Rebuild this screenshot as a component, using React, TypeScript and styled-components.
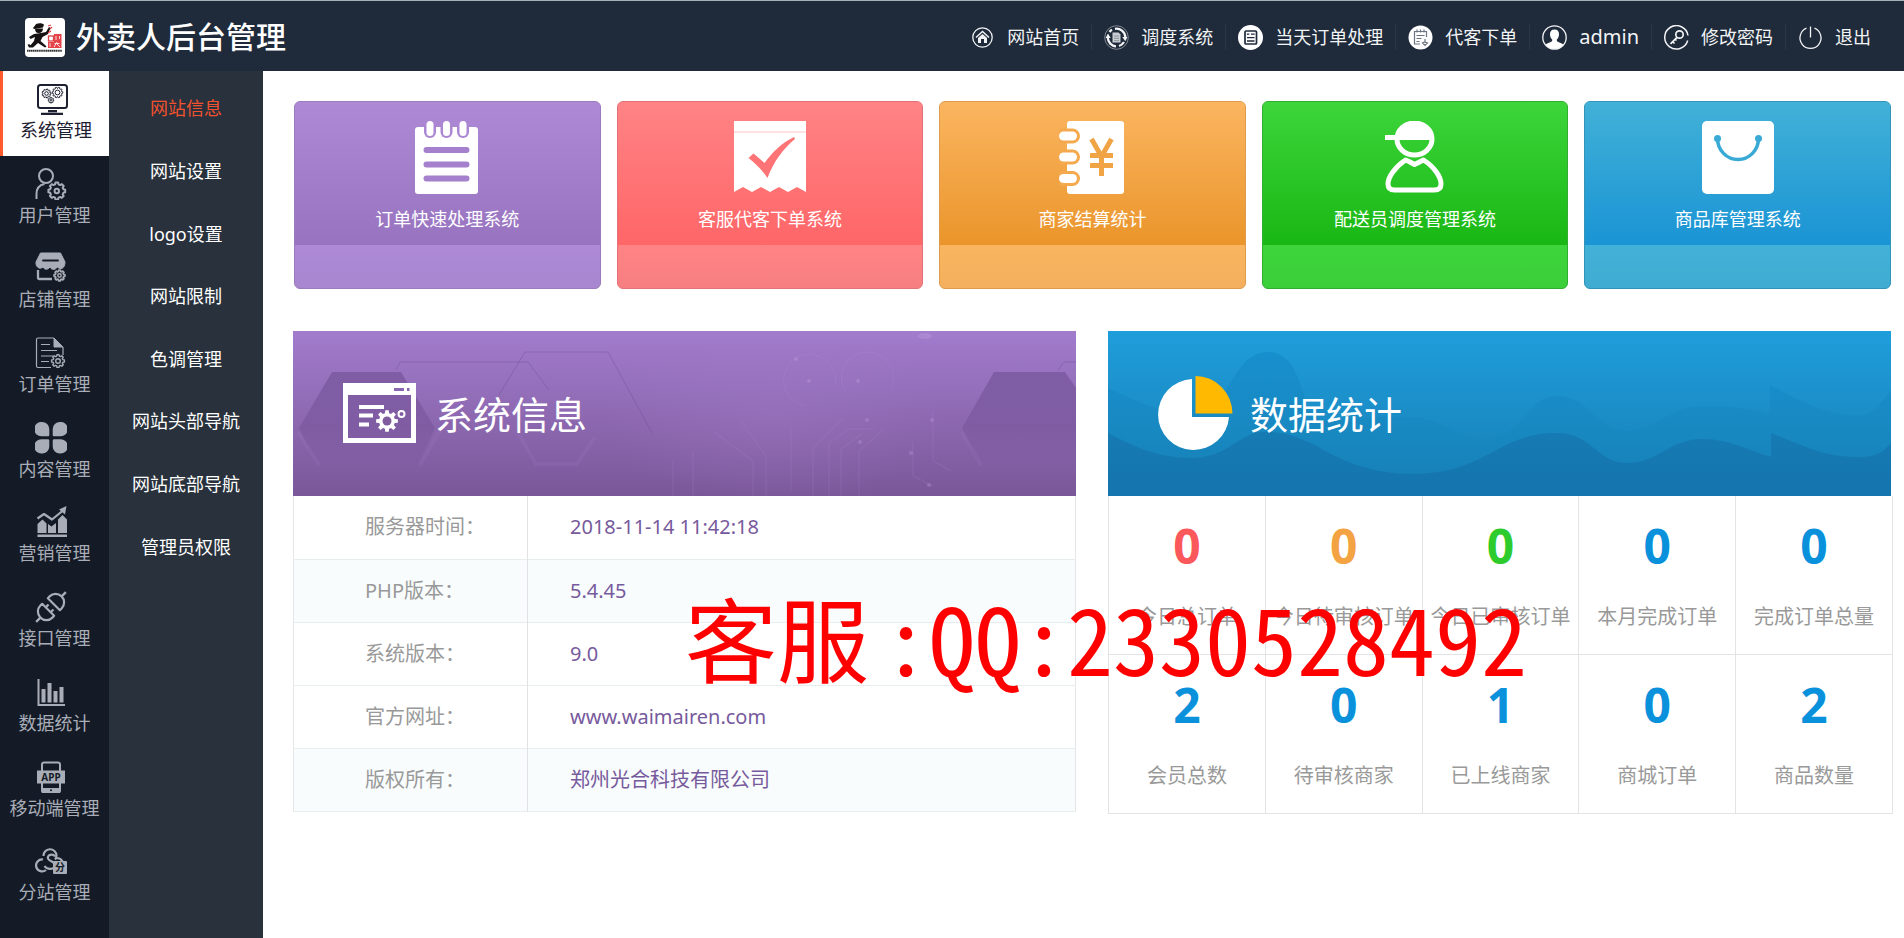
import React from "react";
import styled, { createGlobalStyle } from "styled-components";

const GlobalStyle = createGlobalStyle`
  *, *::before, *::after { box-sizing: border-box; }
  body {
    margin: 0;
    background: #fff;
    font-family: "Noto Sans", "Noto Sans CJK SC", sans-serif;
    font-size: 18px;
    line-height: 26px;
  }
  a { color: inherit; text-decoration: none; }
  svg { display: block; }
`;

/* ---------- layout ---------- */

const Page = styled.div`
  display: flex;
  flex-direction: column;
  min-height: 100vh;
`;

const Header = styled.header`
  display: flex;
  align-items: center;
  justify-content: space-between;
  height: 71px;
  padding: 2px 21px 0 25px;
  background: #1f2a3a;
  border-top: 1px solid #a5b1b5;
`;

const Brand = styled.a`
  display: flex;
  align-items: center;
  gap: 11px;
  color: #fff;
  white-space: nowrap;
`;

const BrandName = styled.span`
  font-size: 30px;
  font-weight: 500;
  line-height: 40px;
`;

const TopNav = styled.nav`
  display: flex;
  align-items: center;
`;

const TopLink = styled.a<{ $latin?: boolean }>`
  display: flex;
  align-items: center;
  gap: 12px;
  height: 26px;
  padding: 0 12px;
  color: #f2f4f6;
  font-size: ${(p) => (p.$latin ? "20px" : "18px")};
  white-space: nowrap;
  & + & { border-left: 1px solid #2b3644; }
`;

const Body = styled.div`
  display: flex;
  flex: 1;
`;

const MainNav = styled.nav`
  flex: none;
  width: 109px;
  background: #141b26;
`;

const MainNavList = styled.div`
  display: grid;
  grid-auto-rows: 1fr;
  min-height: 847px;
`;

const MainNavLink = styled.a<{ $active?: boolean }>`
  display: flex;
  flex-direction: column;
  align-items: center;
  gap: 2px;
  padding-top: 12px;
  color: ${(p) => (p.$active ? "#1c2030" : "#a9adb7")};
  background: ${(p) => (p.$active ? "#fff" : "transparent")};
  border-left: ${(p) => (p.$active ? "3px solid #ff5a2c" : "0")};
  white-space: nowrap;
  svg { margin-right: 8px; }
`;

const SubNav = styled.nav`
  flex: none;
  width: 154px;
  padding-top: 6px;
  background: #28313c;
`;

const SubNavList = styled.div`
  display: grid;
  grid-auto-rows: 1fr;
  min-height: 501px;
`;

const SubNavLink = styled.a<{ $active?: boolean }>`
  display: grid;
  place-items: center;
  color: ${(p) => (p.$active ? "#f2522f" : "#fff")};
  white-space: nowrap;
`;

const Main = styled.main`
  flex: 1;
  min-width: 0;
  padding: 30px 13px 30px 30px;
`;

/* ---------- shortcut cards ---------- */

const Cards = styled.div`
  display: grid;
  grid-template-columns: repeat(5, 1fr);
  gap: 16px;
  padding-left: 1px;
`;

const Card = styled.a<{ $fill: string; $edge: string }>`
  display: flex;
  flex-direction: column;
  border: 1px solid ${(p) => p.$edge};
  border-radius: 6px;
  overflow: hidden;
  color: #fff;
  background: ${(p) => p.$fill};
`;

const CardTop = styled.div<{ $from: string; $to: string }>`
  display: flex;
  flex-direction: column;
  align-items: center;
  gap: 12px;
  padding: 19px 0 13px;
  background: linear-gradient(${(p) => p.$from}, ${(p) => p.$to});
  white-space: nowrap;
`;

const CardFoot = styled.div`
  height: 43px;
  background: linear-gradient(transparent, rgba(0, 0, 0, 0.03));
`;

/* ---------- panels ---------- */

const Panels = styled.div`
  position: relative;
  display: grid;
  grid-template-columns: 1fr 1fr;
  align-items: start;
  gap: 32px;
  margin-top: 42px;
`;

const Panel = styled.section`
  min-width: 0;
`;

const Banner = styled.header<{ $from: string; $to: string }>`
  position: relative;
  display: flex;
  align-items: center;
  gap: 17px;
  height: 165px;
  padding-left: 50px;
  color: #fff;
  background: linear-gradient(${(p) => p.$from}, ${(p) => p.$to});
`;

const BannerArt = styled.svg`
  position: absolute;
  inset: 0;
  width: 100%;
  height: 100%;
`;

const BannerIcon = styled.svg`
  position: relative;
`;

const BannerTitle = styled.h2`
  position: relative;
  margin: 0;
  font-size: 38px;
  font-weight: 400;
  line-height: 50px;
`;

const InfoTable = styled.table`
  width: 100%;
  border: 1px solid #e6e6ea;
  border-top: 0;
  border-collapse: collapse;
  table-layout: fixed;
  font-size: 20px;
`;

const InfoRow = styled.tr<{ $tint?: boolean }>`
  height: 63px;
  background: ${(p) => (p.$tint ? "#f8fcfc" : "#fff")};
  border-bottom: 1px solid #e8eeee;
`;

const InfoLabel = styled.th`
  width: 234px;
  padding: 0 0 0 71px;
  border-right: 1px solid #e2e2e6;
  color: #999;
  font-weight: 400;
  text-align: left;
`;

const InfoValue = styled.td`
  padding: 0 0 0 42px;
  color: #775a9c;
`;

const Stats = styled.dl`
  display: grid;
  grid-template-columns: repeat(5, 1fr);
  margin: 0 -2px 0 0;
  border-left: 1px solid #e4e4e6;
`;

const Stat = styled.div`
  display: flex;
  flex-direction: column-reverse;
  justify-content: flex-end;
  align-items: center;
  gap: 28px;
  height: 159px;
  padding-top: 20px;
  border: solid #e4e4e6;
  border-width: 0 1px 1px 0;
`;

const StatLabel = styled.dt`
  color: #999;
  font-size: 20px;
  white-space: nowrap;
`;

const StatValue = styled.dd<{ $color: string }>`
  margin: 0;
  color: ${(p) => p.$color};
  font-size: 48px;
  font-weight: 700;
  line-height: 60px;
`;

const Contact = styled.p`
  position: absolute;
  top: 245px;
  left: 392px;
  display: flex;
  gap: 14px;
  margin: 0;
  color: #f00;
  font-family: "Noto Sans Mono CJK SC", "Noto Sans CJK SC", sans-serif;
  font-size: 92px;
  line-height: 120px;
  white-space: nowrap;
  pointer-events: none;
`;

/* ---------- icon helpers ---------- */

const gear = (cx: number, cy: number, r: number, teeth: number, depth: number) => {
  const pts: string[] = [];
  for (let i = 0; i < teeth; i++) {
    const step = (Math.PI * 2) / teeth;
    [[-0.34, r - depth], [-0.2, r], [0.2, r], [0.34, r - depth]].forEach(([o, rad]) => {
      const a = i * step + o * step;
      pts.push(`${(cx + rad * Math.cos(a)).toFixed(2)},${(cy + rad * Math.sin(a)).toFixed(2)}`);
    });
  }
  return pts.join(" ");
};

const NavSvg = ({ children }: { children: React.ReactNode }) => (
  <svg width="32" height="32" viewBox="0 0 32 32" fill="none" stroke="currentColor" strokeWidth="2" strokeLinejoin="round" aria-hidden="true">
    {children}
  </svg>
);

const SystemIcon = () => (
  <NavSvg>
    <rect x="2" y="2" width="29" height="23" rx="2.5" />
    <g strokeWidth="1">
      <polygon points={gear(10.5, 10.5, 4.5, 9, 1)} />
      <circle cx="10.5" cy="10.5" r="1.8" />
      <polygon points={gear(21.5, 9.5, 5.3, 10, 1)} />
      <circle cx="21.5" cy="9.5" r="2.4" />
      <polygon points={gear(15, 17.3, 2.8, 8, 0.7)} />
      <circle cx="15" cy="17.3" r="0.8" />
    </g>
    <path d="M12 28.2h9M5 30.800h22" strokeWidth="2.300" />
  </NavSvg>
);

const UserIcon = () => (
  <NavSvg>
    <circle cx="11" cy="8" r="7" />
    <path d="M1.500 31v-5c0-6 3-9 8-10" />
    <polygon points={gear(21.800, 23, 8.500, 8, 1.700)} />
    <circle cx="21.800" cy="23" r="2.200" />
  </NavSvg>
);

const ShopIcon = () => (
  <NavSvg>
    <path d="M5.500 1h20l4.500 9c0 7-5 8-7.500 5-2.500 3.500-6 3-7.500 0-2 3-5.500 3-7 0C4.500 18 .5 15 1 10z" fill="currentColor" strokeWidth="1" />
    <path d="M8 8.500h15" stroke="#141b26" strokeWidth="1.800" strokeLinecap="round" />
    <path d="M3 18v7.500c0 1 .5 1.500 1.500 1.500H17" strokeWidth="2.300" />
    <polygon points={gear(24.500, 23.500, 5.500, 8, 1.300)} strokeWidth="1.700" />
    <circle cx="24.500" cy="23.500" r="1.700" strokeWidth="1.500" />
  </NavSvg>
);

const OrderIcon = () => (
  <NavSvg>
    <path d="M16 30.500H3c-1 0-1.500-.5-1.500-1.500V2.500C1.500 1.500 2 1 3 1h16M28 10v8" strokeWidth="1.200" />
    <path d="M19 1l9 9h-9z" fill="currentColor" strokeWidth="1" />
    <path d="M6 7.500h9M6 13.500h16M6 19h12M6 24.500h8" strokeWidth="1.200" />
    <polygon points={gear(23, 24, 6.500, 8, 1.500)} strokeWidth="1.400" />
    <circle cx="23" cy="24" r="2.300" strokeWidth="1.400" />
  </NavSvg>
);

const ContentIcon = () => (
  <NavSvg>
    <g fill="currentColor" stroke="none">
      <path d="M7.200 0a7.200 7.200 0 1 0 0 14.300h5.600c1 0 1.500-.5 1.500-1.500V7A7.100 7.100 0 0 0 7.200 0z" />
      <path d="M24.800 0a7.200 7.200 0 1 1 0 14.300h-5.600c-1 0-1.500-.5-1.500-1.500V7a7.100 7.100 0 0 1 7.100-7z" />
      <path d="M7.200 31.500a7.200 7.200 0 1 1 0-14.300h5.600c1 0 1.500.5 1.500 1.500v5.700a7.100 7.100 0 0 1-7.100 7.100z" />
      <path d="M24.800 31.500a7.200 7.200 0 1 0 0-14.300h-5.600c-1 0-1.500.5-1.500 1.500v5.700a7.100 7.100 0 0 0 7.100 7.100z" />
    </g>
  </NavSvg>
);

const MarketIcon = () => (
  <NavSvg>
    <g fill="currentColor" stroke="none">
      <path d="M2.500 27V18l5-4.500 4 4V27zM13 27V18l3.500 2.500L21 17v10zM23 27V13.500L27.500 9l4.500 4.500V27z" />
      <path d="M2.500 28.500H32V31H2.500z" />
      <path d="M24 3.500L31.500 0 30 8.500z" />
    </g>
    <path d="M2.500 12.500L9 8l8 5.500L28 4.500" strokeWidth="2.200" />
  </NavSvg>
);

const PlugIcon = () => (
  <NavSvg>
    <g transform="rotate(-45 16 16)" strokeWidth="2.200">
      <path d="M-5 16h6M31 16h6" strokeWidth="2.300" />
      <path d="M12 7.500v17H9.500a8.500 8.500 0 0 1 0-17zM20 7.500v17h2.500a8.500 8.500 0 0 0 0-17z" />
      <path d="M12 12.500h4M12 19.500h4" />
    </g>
  </NavSvg>
);

const ChartIcon = () => (
  <NavSvg>
    <path d="M3.500 3v26H30" strokeLinejoin="miter" />
    <path d="M8.500 13v13.500M14.500 7v19.500M20.500 15v11.500M26.500 11v15.500" strokeWidth="4" />
  </NavSvg>
);

const AppIcon = () => (
  <NavSvg>
    <path d="M7 10V3.500C7 2 7.500 1.500 9 1.500h14c1.500 0 2 .5 2 2V10M7 21v8.500c0 1.500.5 2 2 2h14c1.500 0 2-.5 2-2V21" />
    <path d="M7 27h18v4.500H7z" fill="currentColor" stroke="none" />
    <rect x="2" y="9.500" width="28" height="13" fill="currentColor" stroke="none" />
    <circle cx="16" cy="29.300" r="1" fill="#141b26" stroke="none" />
    <text x="16" y="19.500" textAnchor="middle" fontSize="10" fontWeight="700" fill="#141b26" stroke="none">APP</text>
  </NavSvg>
);

const BranchIcon = () => (
  <NavSvg>
    <path d="M8 14.500a6 6 0 1 0 3 10.500M8.500 11a6.500 6.500 0 0 1 13-.5c0 2-.5 3-1.500 4M20 11.500c-2-3-8-2-7 2 .8 3 7 2.500 7 6.500 0 5-8 5-10.500 1M21.500 13c3 0 5 1.500 6 3.500" strokeWidth="2.200" />
    <rect x="18" y="16" width="14" height="13" rx="1" fill="currentColor" stroke="none" />
    <text x="25" y="26" textAnchor="middle" fontSize="10" fontWeight="700" fill="#141b26" stroke="none">分</text>
  </NavSvg>
);

const TopSvg = ({ children }: { children: React.ReactNode }) => (
  <svg width="25" height="25" viewBox="0 0 25 25" fill="none" stroke="currentColor" strokeWidth="1.500" aria-hidden="true">
    {children}
  </svg>
);

const HomeTop = () => (
  <TopSvg>
    <circle cx="12.500" cy="12.500" r="9.700" strokeWidth="1.300" />
    <path d="M6 12.500l6.500-6 6.500 6" />
    <path d="M8 13l4.500-4 4.500 4v5h-3v-4h-3v4H8z" fill="currentColor" stroke="none" />
  </TopSvg>
);

const DispatchTop = () => (
  <TopSvg>
    <circle cx="12.500" cy="12.500" r="11.800" strokeWidth="1" opacity=".45" />
    <path d="M12 21.300a8.800 8.800 0 0 1-8.200-8.500M11 3.800A8.800 8.800 0 0 1 21.300 12M20 17a9 9 0 0 1-5 4M5.500 7A9 9 0 0 1 8 4.800" strokeWidth="2.300" />
    <path d="M1.500 13L4 8.500 6.700 13zM18.300 12h5.200L21.300 16.300z" fill="currentColor" stroke="none" />
    <path d="M8.500 7.500h6l2 2v8h-8z" fill="#c9cdd3" stroke="none" />
    <path d="M10 11h5M10 13.300h5M10 15.600h5" stroke="#7d8591" strokeWidth=".8" />
  </TopSvg>
);

const OrdersTop = () => (
  <TopSvg>
    <circle cx="12.500" cy="12.500" r="12.500" fill="#fff" stroke="none" />
    <rect x="7" y="6" width="11.500" height="13" rx="1" stroke="#1f2a3a" strokeWidth="1.700" />
    <path d="M8.800 9.200h2.500M13 9.200h3.700M9 12.700h7.500M9 16h7.500" stroke="#1f2a3a" strokeWidth="1.300" />
  </TopSvg>
);

const ProxyTop = () => (
  <TopSvg>
    <circle cx="12.500" cy="12.500" r="12" fill="#fff" stroke="none" />
    <g stroke="#6b7480" strokeWidth="1.200">
      <path d="M12 19H6.500V6.500h12V12" />
      <path d="M9 4.500v3M12.500 4.500v3M16 4.500v3M8.500 10.500h8M8.500 13.500h5M8.500 16.500h3" />
      <path d="M17 14v3l2.500 1-2.500 2.500-2.500-2.500 2-1" />
    </g>
  </TopSvg>
);

const AdminTop = () => (
  <TopSvg>
    <circle cx="12.500" cy="12.500" r="11.700" strokeWidth="1.300" />
    <path d="M12.500 4.500c-3 0-4.500 2-4.500 4.500 0 3 1 4.500 2.300 5.700 0 1.800-.8 2-2.800 2.800-1.700.6-3 1.200-3.800 2.300a11.700 11.700 0 0 0 17.600 0c-.8-1.100-2.100-1.700-3.800-2.300-2-.8-2.800-1-2.800-2.800C16 13.500 17 12 17 9c0-2.500-1.500-4.500-4.500-4.500z" fill="#fff" stroke="none" />
    <path d="M4 20a11.500 11.500 0 0 0 17 0z" fill="#fff" stroke="none" />
  </TopSvg>
);

const KeyTop = () => (
  <TopSvg>
    <path d="M24 10.500A11.700 11.700 0 1 0 23.700 15.500" />
    <circle cx="15.500" cy="9.500" r="3.700" strokeWidth="1.700" />
    <path d="M13 12.300l-6.500 6.500M8.500 16.500l2 2M11 14l1.500 1.500" strokeWidth="1.700" />
  </TopSvg>
);

const ExitTop = () => (
  <TopSvg>
    <path d="M8.500 3.200a10.500 10.500 0 1 0 8 0M12.500 1.500v11" strokeWidth="1.300" />
  </TopSvg>
);

const Logo = () => (
  <svg width="40" height="39" viewBox="0 0 40 39" aria-hidden="true">
    <rect width="40" height="39" rx="4" fill="#fff" />
    <g fill="#171212">
      <path d="M10 7.500C11 5 16 4.500 19 6.500l-1 3-9 1.500-1-1z" />
      <path d="M10 10.500h8c0 3-2 4.800-4.500 4.500C11 15 10 13 10 10.500z" />
      <path d="M9 16l7-1 5-1 3-5 1.500 1-2.500 6-5.500 3-2 4 4 3.500 2 2-1.500 1-7-4.500-5 4.500-4 0-1.500-3 2-.3 1 1L9 23l1-4-4.500 2L4 19z" />
    </g>
    <g stroke="#df4248" fill="none" strokeWidth="1.300">
      <path d="M23 8l3-1M25 11l2-2M26 13l-3 2" />
      <rect x="23.500" y="18" width="5" height="5" />
    </g>
    <path d="M29 16h7.500v14H23v-6h6z" fill="#e5434a" />
    <path d="M31 18v4M34.500 18v3M29.500 25.500h5M32 24l-3 5M32 26l3 3M25 25v4" stroke="#fff" strokeWidth=".8" />
    <path d="M2 32.800h35" stroke="#333" strokeWidth="2" strokeDasharray="1.500 .4" />
  </svg>
);

/* ---------- card icons ---------- */

const NotepadIcon = () => (
  <svg width="64" height="73" viewBox="0 0 64 73" aria-hidden="true">
    <rect x="0" y="6" width="63" height="67" rx="3" fill="#fff" />
    {[15, 31.5, 48].map((x) => (
      <g key={x}>
        <rect x={x - 6} y="-3" width="12" height="20" rx="6" fill="#ab86d3" />
        <rect x={x - 3.500} y="0" width="7" height="15" rx="3.500" fill="#fff" />
      </g>
    ))}
    <path d="M11.500 29h40M11.500 43.500h40M11.500 57.500h40" stroke="#a580cc" strokeWidth="6" strokeLinecap="round" />
  </svg>
);

const ReceiptIcon = () => (
  <svg width="72" height="73" viewBox="0 0 72 73" aria-hidden="true">
    <path d="M0 0h72v71l-9-5-9 5-9-5-9 5-9-5-9 5-9-5-9 5z" fill="#fff" />
    <path d="M0 11h72" stroke="#ffe1e2" strokeWidth="2" />
    <path d="M14.500 37l5-4.500 11 9.500c8-11 17-20 29.500-26l1 2C49 28 40 40 33.500 57 28 49 22 43 14.500 37z" fill="#fe7476" />
  </svg>
);

const LedgerIcon = () => (
  <svg width="66" height="73" viewBox="0 0 66 73" aria-hidden="true">
    <rect x="8" y="0" width="57" height="73" rx="3" fill="#fff" />
    {[15, 36, 57.500].map((y) => (
      <g key={y}>
        <rect x="-4" y={y - 7.500} width="25" height="15" rx="7.500" fill="#f4a94d" />
        <rect x="0" y={y - 4.500} width="18" height="9" rx="4.500" fill="#fff" />
      </g>
    ))}
    <path d="M32.500 18L42.500 35.500 52.500 18M42.500 34v21M31 34.500h23M31 44.500h23" stroke="#f1a446" strokeWidth="5" fill="none" />
  </svg>
);

const CourierIcon = () => (
  <svg width="60" height="73" viewBox="0 0 60 73" fill="none" stroke="#fff" strokeWidth="5" aria-hidden="true">
    <ellipse cx="29.500" cy="18" rx="17.500" ry="16" />
    <path d="M10 19a19.500 19 0 0 1 39 0z" fill="#fff" stroke="none" />
    <path d="M0 16.500h14" />
    <path d="M20.500 39C10 46 3 56 3 63c0 4 2.500 6 6.500 6h40c4 0 6.500-2 6.500-6 0-7-6.500-17-17.500-24l-3 1.500-6 3-5.500-3z" strokeLinejoin="round" />
  </svg>
);

const BagIcon = () => (
  <svg width="72" height="73" viewBox="0 0 72 73" aria-hidden="true">
    <rect width="72" height="73" rx="5" fill="#fff" />
    <path d="M15.500 17.500a20.500 21 0 0 0 41 0" stroke="#39a9d6" strokeWidth="3.500" fill="none" />
    <circle cx="15.500" cy="17.500" r="3.500" fill="#39a9d6" />
    <circle cx="56.500" cy="17.500" r="3.500" fill="#39a9d6" />
  </svg>
);

/* ---------- banner drawings ---------- */

const CircuitArt = () => (
  <BannerArt viewBox="0 0 783 165" preserveAspectRatio="none" aria-hidden="true">
    <defs>
      <linearGradient id="hex" x1="0" y1="0" x2="0" y2="1">
        <stop offset="0" stopColor="#7b599f" stopOpacity=".85" />
        <stop offset=".5" stopColor="#7b599f" stopOpacity=".75" />
        <stop offset=".85" stopColor="#7b599f" stopOpacity="0" />
      </linearGradient>
      <radialGradient id="glow">
        <stop offset="0" stopColor="#a27bc6" stopOpacity=".35" />
        <stop offset="1" stopColor="#a27bc6" stopOpacity="0" />
      </radialGradient>
    </defs>
    <ellipse cx="480" cy="85" rx="170" ry="90" fill="url(#glow)" />
    <path d="M39 41h69l34 56-26 55H32L6 97zM701 41h71l11 16v95h-90l-24-55z" fill="url(#hex)" />
    <g fill="none" stroke="#6e4c92" strokeOpacity=".4">
      <path d="M103 39l4-8h128l21 28M206 64l26-43h83l44 81M765 39l6-8h12" />
    </g>
    <g fill="none" stroke="#a882cb" strokeOpacity=".16" strokeWidth="4">
      <path d="M5 101l21 33M147 99l-20 35M225 102l18 31h41l18-27M669 101l19 33" />
    </g>
    <g fill="none" stroke="#b693da" strokeOpacity=".2">
      <path d="M420 100l40 30v35M448 90l25 35v40M536 165V112l20-14h25M548 165V118l22-16M566 165v-45l25-22M520 165v-48l30-30M620 110v35l20 10M498 160V95M512 75a26 26 0 1 1 30-20M552 60a26 26 0 1 1 45 0M380 130v35M400 120v45M640 80v50l18 10" />
    </g>
    <g fill="#c3a4e2" fillOpacity=".3">
      <circle cx="503" cy="28" r="2" /><circle cx="516" cy="50" r="2" /><circle cx="565" cy="50" r="2" />
      <circle cx="574" cy="89" r="2" /><circle cx="639" cy="89" r="2" /><circle cx="618" cy="122" r="2" />
      <circle cx="636" cy="154" r="2" /><circle cx="567" cy="111" r="2" /><ellipse cx="632" cy="5" rx="7" ry="3" />
    </g>
  </BannerArt>
);

const WaveArt = () => (
  <BannerArt viewBox="0 0 783 165" preserveAspectRatio="none" aria-hidden="true">
    <defs>
      <linearGradient id="wave" x1="0" y1="0" x2="0" y2="1">
        <stop offset="0" stopColor="#0f82c4" stopOpacity=".45" />
        <stop offset=".6" stopColor="#1686bd" stopOpacity=".4" />
        <stop offset="1" stopColor="#1580b8" stopOpacity=".4" />
      </linearGradient>
    </defs>
    <path d="M0 57C30 70 50 82 80 82c45 0 42-61 80-61 32 0 35 50 45 68 15 2 60-5 99-3 35 2 40 21 73 21 40 0 40-42 72-42s40 35 70 35 40-25 76-25c28 0 50 3 67 8V54c30 15 55 32 92 30 12-2 20-12 29-25v106H0z" fill="url(#wave)" />
    <path d="M0 102c30 16 55 26 86 25 35-2 45-24 67-26 25-1 35 5 52 12 30 18 60 30 99 30 75 0 85-41 145-41 35 0 40 30 70 30 32 0 42-24 76-24 25 0 48 12 68 18v-24c30 12 55 26 93 24 14-1 20-6 27-14v53H0z" fill="#146ca6" fillOpacity=".5" />
  </BannerArt>
);

const WindowIcon = () => (
  <BannerIcon width="75" height="75" viewBox="0 0 75 75" fill="none" stroke="#fff" aria-hidden="true">
    <path d="M0 7h73v60H0zM5 19v43h63V19z" fill="#fff" fillRule="evenodd" stroke="none" />
    <path d="M51 13.500h10M64 13.500h2.500" stroke="#8a67b0" strokeWidth="3" />
    <path d="M16 31h25M16 39.500h14M16 48.500h10" strokeWidth="4" />
    <polygon points={gear(44, 45, 11, 8, 3)} fill="#fff" stroke="none" />
    <circle cx="44" cy="45" r="4.500" fill="#805c9f" stroke="none" />
    <circle cx="58.500" cy="38" r="3" strokeWidth="2" />
  </BannerIcon>
);

const PieIcon = () => (
  <BannerIcon width="75" height="75" viewBox="0 0 75 75" aria-hidden="true">
    <path d="M34 3v38h37A35.500 35.500 0 1 1 34 3z" fill="#fff" />
    <path d="M37.500 0A37 38 0 0 1 74.500 37.500h-37z" fill="#ffb900" />
  </BannerIcon>
);

/* ---------- data ---------- */

const topLinks = [
  { text: "网站首页", Icon: HomeTop },
  { text: "调度系统", Icon: DispatchTop },
  { text: "当天订单处理", Icon: OrdersTop },
  { text: "代客下单", Icon: ProxyTop },
  { text: "admin", Icon: AdminTop, latin: true },
  { text: "修改密码", Icon: KeyTop },
  { text: "退出", Icon: ExitTop },
];

const mainLinks = [
  { text: "系统管理", Icon: SystemIcon },
  { text: "用户管理", Icon: UserIcon },
  { text: "店铺管理", Icon: ShopIcon },
  { text: "订单管理", Icon: OrderIcon },
  { text: "内容管理", Icon: ContentIcon },
  { text: "营销管理", Icon: MarketIcon },
  { text: "接口管理", Icon: PlugIcon },
  { text: "数据统计", Icon: ChartIcon },
  { text: "移动端管理", Icon: AppIcon },
  { text: "分站管理", Icon: BranchIcon },
];

const subLinks = ["网站信息", "网站设置", "logo设置", "网站限制", "色调管理", "网站头部导航", "网站底部导航", "管理员权限"];

const cards = [
  { text: "订单快速处理系统", Icon: NotepadIcon, from: "#ae8ad6", to: "#9873bf", edge: "#9a7bbd" },
  { text: "客服代客下单系统", Icon: ReceiptIcon, from: "#ff8385", to: "#ff6668", edge: "#e27477" },
  { text: "商家结算统计", Icon: LedgerIcon, from: "#fbb560", to: "#ea952b", edge: "#dc9c4c" },
  { text: "配送员调度管理系统", Icon: CourierIcon, from: "#3dd53b", to: "#19b714", edge: "#2fae2f" },
  { text: "商品库管理系统", Icon: BagIcon, from: "#42b1d8", to: "#1a94d4", edge: "#3294b8" },
];

const info = [
  { label: "服务器时间：", value: "2018-11-14 11:42:18" },
  { label: "PHP版本：", value: "5.4.45", tint: true },
  { label: "系统版本：", value: "9.0" },
  { label: "官方网址：", value: "www.waimairen.com" },
  { label: "版权所有：", value: "郑州光合科技有限公司", tint: true },
];

const BLUE = "#0a91dc";
const stats = [
  { label: "今日总订单", value: 0, color: "#fb585c" },
  { label: "今日待审核订单", value: 0, color: "#f4a343" },
  { label: "今日已审核订单", value: 0, color: "#2ecb2c" },
  { label: "本月完成订单", value: 0, color: BLUE },
  { label: "完成订单总量", value: 0, color: BLUE },
  { label: "会员总数", value: 2, color: BLUE },
  { label: "待审核商家", value: 0, color: BLUE },
  { label: "已上线商家", value: 1, color: BLUE },
  { label: "商城订单", value: 0, color: BLUE },
  { label: "商品数量", value: 2, color: BLUE },
];

export default function App() {
  return (
    <Page>
      <GlobalStyle />
      <Header>
        <Brand href="#">
          <Logo />
          <BrandName>外卖人后台管理</BrandName>
        </Brand>
        <TopNav>
          {topLinks.map(({ text, Icon, latin }) => (
            <TopLink key={text} href="#" $latin={latin}>
              <Icon />
              {text}
            </TopLink>
          ))}
        </TopNav>
      </Header>
      <Body>
        <MainNav>
          <MainNavList>
            {mainLinks.map(({ text, Icon }, i) => (
              <MainNavLink key={text} href="#" $active={i === 0}>
                <Icon />
                {text}
              </MainNavLink>
            ))}
          </MainNavList>
        </MainNav>
        <SubNav>
          <SubNavList>
            {subLinks.map((text, i) => (
              <SubNavLink key={text} href="#" $active={i === 0}>
                {text}
              </SubNavLink>
            ))}
          </SubNavList>
        </SubNav>
        <Main>
          <Cards>
            {cards.map(({ text, Icon, from, to, edge }) => (
              <Card key={text} href="#" $fill={from} $edge={edge}>
                <CardTop $from={from} $to={to}>
                  <Icon />
                  <span>{text}</span>
                </CardTop>
                <CardFoot />
              </Card>
            ))}
          </Cards>
          <Panels>
            <Panel>
              <Banner $from="#a27ccd" $to="#7a5798">
                <CircuitArt />
                <WindowIcon />
                <BannerTitle>系统信息</BannerTitle>
              </Banner>
              <InfoTable>
                <tbody>
                  {info.map(({ label, value, tint }) => (
                    <InfoRow key={label} $tint={tint}>
                      <InfoLabel scope="row">{label}</InfoLabel>
                      <InfoValue>{value}</InfoValue>
                    </InfoRow>
                  ))}
                </tbody>
              </InfoTable>
            </Panel>
            <Panel>
              <Banner $from="#1f9edb" $to="#177db4">
                <WaveArt />
                <PieIcon />
                <BannerTitle>数据统计</BannerTitle>
              </Banner>
              <Stats>
                {stats.map(({ label, value, color }) => (
                  <Stat key={label}>
                    <StatLabel>{label}</StatLabel>
                    <StatValue $color={color}>{value}</StatValue>
                  </Stat>
                ))}
              </Stats>
            </Panel>
            <Contact>
              <span>客服</span>
              <span>:QQ:2330528492</span>
            </Contact>
          </Panels>
        </Main>
      </Body>
    </Page>
  );
}
